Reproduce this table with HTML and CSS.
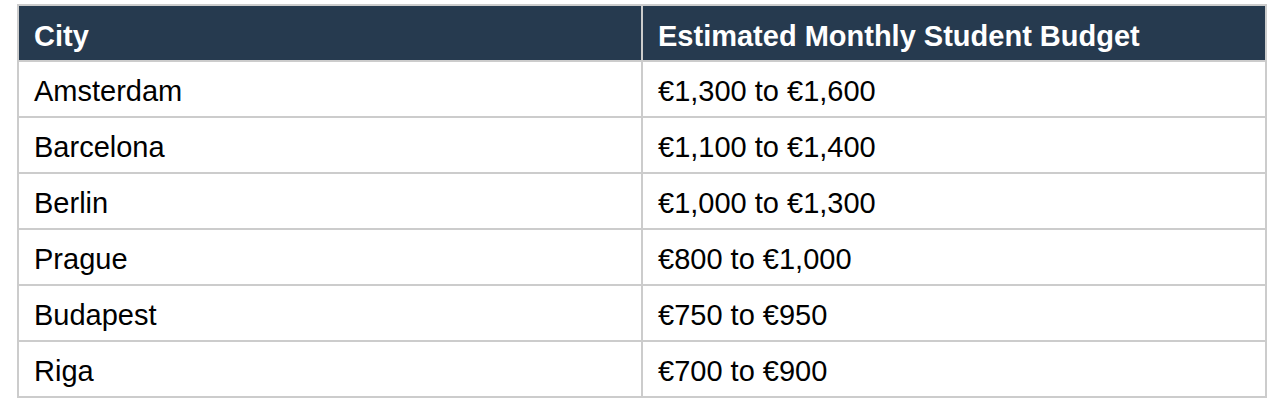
FILE: index.html
```html
<!DOCTYPE html>
<html lang="en">
<head>
<meta charset="utf-8">
<title>Student Budget</title>
<link rel="stylesheet" href="styles.css">
</head>
<body>
<table class="budget">
  <thead>
    <tr><th>City</th><th>Estimated Monthly Student Budget</th></tr>
  </thead>
  <tbody>
    <tr><td>Amsterdam</td><td>€1,300 to €1,600</td></tr>
    <tr><td>Barcelona</td><td>€1,100 to €1,400</td></tr>
    <tr><td>Berlin</td><td>€1,000 to €1,300</td></tr>
    <tr><td>Prague</td><td>€800 to €1,000</td></tr>
    <tr><td>Budapest</td><td>€750 to €950</td></tr>
    <tr><td>Riga</td><td>€700 to €900</td></tr>
  </tbody>
</table>
</body>
</html>
```

FILE: styles.css
```css
html, body {
  margin: 0;
  padding: 0;
  background: #ffffff;
}

body {
  font-family: "Liberation Sans", Arial, Helvetica, sans-serif;
}

.budget {
  margin: 4px 0 0 17px;
  width: 1250px;
  table-layout: fixed;
  border-collapse: collapse;
  font-size: 29px;
  color: #000000;
}

.budget th,
.budget td {
  border: 2px solid #cccccc;
  text-align: left;
  padding: 4px 15px 0 15px;
  line-height: 50px;
  white-space: nowrap;
  vertical-align: top;
}

.budget th {
  background: #263a4f;
  color: #ffffff;
  font-weight: bold;
  padding-top: 7px;
  line-height: 47px;
}
```
